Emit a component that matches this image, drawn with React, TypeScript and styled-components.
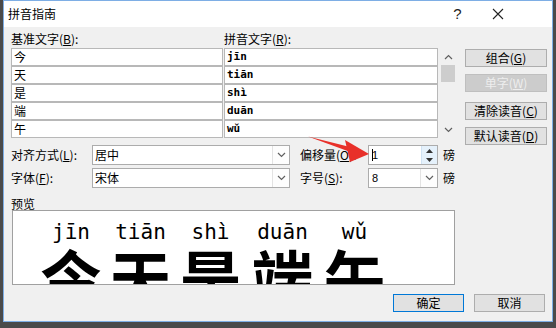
import React from "react";
import styled, { createGlobalStyle } from "styled-components";

const Global = createGlobalStyle`
  html, body { margin: 0; padding: 0; }
  body {
    background: #4a4a4a;
    width: 556px;
    height: 328px;
    overflow: hidden;
    font-family: "Noto Sans CJK SC", "Noto Sans", sans-serif;
    font-size: 12px;
    color: #000;
  }
`;

const Window = styled.div`
  position: relative;
  box-sizing: border-box;
  margin-left: 3px;
  width: 550px;
  height: 322px;
  border: 1px solid #7eaee5;
  background: #f0f0f0;
  display: flex;
  flex-direction: column;
`;

const TitleBar = styled.div`
  height: 26px;
  background: #ffffff;
  display: flex;
  align-items: center;
  padding-left: 4px;
  font-size: 12px;
  line-height: 26px;
`;

const TitleText = styled.div`
  flex: 1;
`;

const TitleBtn = styled.div<{ $w: number }>`
  width: ${(p) => p.$w}px;
  height: 26px;
  display: flex;
  align-items: center;
  justify-content: center;
  font-family: "Liberation Sans", sans-serif;
  font-size: 15px;
  color: #222;
`;

const Body = styled.div`
  flex: 1;
  display: flex;
  flex-direction: column;
  padding: 4px 5px 0 7px;
`;

const TopSection = styled.div`
  display: flex;
  gap: 9px;
`;

const ListBlock = styled.div`
  width: 445px;
  display: flex;
  flex-direction: column;
`;

const LabelRow = styled.div`
  height: 17px;
  display: grid;
  grid-template-columns: 213px 1fr;
  line-height: 15px;
`;

const Label = styled.span`
  white-space: nowrap;
  line-height: inherit;
`;

const Key = styled.span`
  text-decoration: underline;
  text-underline-offset: 1px;
`;

const ListRow = styled.div`
  display: flex;
  gap: 2px;
`;

const Table = styled.div`
  display: grid;
  grid-template-columns: 212px 214px;
  grid-auto-rows: 18px;
  column-gap: 1px;
`;

const Cell = styled.div<{ $mono?: boolean }>`
  box-sizing: border-box;
  border: 1px solid #b8b8b8;
  background: #fff;
  padding-left: 2px;
  display: flex;
  align-items: center;
  font-family: ${(p) =>
    p.$mono
      ? '"DejaVu Sans Mono", monospace'
      : '"Noto Sans CJK SC", sans-serif'};
  font-size: ${(p) => (p.$mono ? "11px" : "12px")};
  font-weight: ${(p) => (p.$mono ? 600 : 400)};
  line-height: 16px;
`;

const ScrollBar = styled.div`
  width: 16px;
  height: 90px;
  display: flex;
  flex-direction: column;
  align-items: center;
`;

const ScrollArrow = styled.div`
  height: 17px;
  width: 16px;
  display: flex;
  align-items: center;
  justify-content: center;
`;

const ScrollTrack = styled.div`
  flex: 1;
  width: 16px;
`;

const Thumb = styled.div`
  width: 14px;
  margin: 0 auto;
  height: 17px;
  background: #cdcdcd;
`;

const SideButtons = styled.div`
  width: 82px;
  display: flex;
  flex-direction: column;
  padding-top: 18px;
`;

const Button = styled.div<{ $mt?: number; $disabled?: boolean; $default?: boolean; $w?: number }>`
  box-sizing: border-box;
  width: ${(p) => (p.$w ? `${p.$w}px` : "100%")};
  height: 18px;
  margin-top: ${(p) => p.$mt ?? 0}px;
  border: 1px solid ${(p) => (p.$default ? "#0078d7" : p.$disabled ? "#bfbfbf" : "#adadad")};
  background: ${(p) => (p.$disabled ? "#cccccc" : "#e1e1e1")};
  color: ${(p) => (p.$disabled ? "#eeeeee" : "#000")};
  display: flex;
  align-items: center;
  justify-content: center;
  line-height: 16px;
  white-space: nowrap;
`;

const Options = styled.div`
  margin-top: 0;
  display: grid;
  grid-template-columns: 81px 198px 78px 70px auto;
  grid-auto-rows: 20px;
  row-gap: 3px;
  align-items: center;
`;

const OptLabel = styled.span<{ $pl?: number }>`
  padding-left: ${(p) => p.$pl ?? 0}px;
  white-space: nowrap;
  line-height: 16px;
`;

const Select = styled.div`
  box-sizing: border-box;
  height: 20px;
  border: 1px solid #acacac;
  background: #fff;
  display: flex;
  align-items: stretch;
`;

const SelectValue = styled.div<{ $mono?: boolean }>`
  flex: 1;
  padding-left: ${(p) => (p.$mono ? 3 : 2)}px;
  display: flex;
  align-items: center;
  font-family: ${(p) => (p.$mono ? '"Liberation Sans", sans-serif' : "inherit")};
  font-size: ${(p) => (p.$mono ? "11px" : "12px")};
  line-height: 16px;
`;

const DropBox = styled.div`
  width: 16px;
  border-left: 1px solid #e3e3e3;
  background: #fdfdfd;
  display: flex;
  align-items: center;
  justify-content: center;
`;

const Spin = styled.div`
  width: 15px;
  display: flex;
  flex-direction: column;
  background: #e5f1fb;
  border-left: 1px solid #cfe2f3;
`;

const SpinHalf = styled.div`
  flex: 1;
  display: flex;
  align-items: center;
  justify-content: center;
`;

const Caret = styled.span`
  display: inline-block;
  width: 1px;
  height: 12px;
  background: #000;
  margin-right: -1px;
`;

const Unit = styled.span`
  padding-left: 5px;
  line-height: 16px;
`;

const PreviewLabel = styled.div`
  margin-top: 9px;
  line-height: 13px;
  height: 13px;
`;

const PreviewBox = styled.div`
  box-sizing: border-box;
  margin-left: 1px;
  width: 443px;
  height: 75px;
  border: 1px solid #a0a0a0;
  background: #fff;
  overflow: hidden;
  display: flex;
  padding-left: 23px;
`;

const Ruby = styled.div<{ $w: number }>`
  width: ${(p) => p.$w}px;
  flex: none;
  display: flex;
  flex-direction: column;
  align-items: center;
`;

const RubyPinyin = styled.div`
  font-family: "DejaVu Sans Mono", monospace;
  font-size: 21px;
  line-height: 24px;
  margin-top: 9px;
  white-space: nowrap;
`;

const RubyBase = styled.div`
  font-family: "Noto Sans CJK SC", sans-serif;
  font-weight: 700;
  font-size: 62px;
  line-height: 62px;
  margin-top: 1px;
`;

const Footer = styled.div`
  margin-top: 9px;
  display: flex;
  justify-content: flex-end;
  gap: 10px;
  padding-right: 2px;
`;

const Overlay = styled.svg`
  position: absolute;
  left: 0;
  top: 0;
  pointer-events: none;
`;

const Chevron = ({ up }: { up?: boolean }) => (
  <svg width="9" height="6" viewBox="0 0 9 6">
    <path
      d={up ? "M1 5 L4.5 1.5 L8 5" : "M1 1 L4.5 4.5 L8 1"}
      fill="none"
      stroke="#606060"
      strokeWidth="1.2"
    />
  </svg>
);

const Tri = ({ up }: { up?: boolean }) => (
  <svg width="7" height="4" viewBox="0 0 7 4">
    <path d={up ? "M0 4 L3.5 0 L7 4Z" : "M0 0 L3.5 4 L7 0Z"} fill="#333" />
  </svg>
);

const rows = [
  ["今", "jīn"],
  ["天", "tiān"],
  ["是", "shì"],
  ["端", "duān"],
  ["午", "wǔ"],
];

const ruby = [
  { b: "今", p: "jīn", w: 70 },
  { b: "天", p: "tiān", w: 69 },
  { b: "是", p: "shì", w: 71 },
  { b: "端", p: "duān", w: 73 },
  { b: "午", p: "wǔ", w: 71 },
];

export default function App() {
  return (
    <>
      <Global />
      <Window>
        <TitleBar>
          <TitleText>拼音指南</TitleText>
          <TitleBtn $w={41}>?</TitleBtn>
          <TitleBtn $w={40}>
            <svg width="12" height="12" viewBox="0 0 12 12">
              <path d="M1 1 L11 11 M11 1 L1 11" stroke="#222" strokeWidth="1.1" />
            </svg>
          </TitleBtn>
          <TitleBtn $w={34} />
        </TitleBar>
        <Body>
          <TopSection>
            <ListBlock>
              <LabelRow>
                <Label>
                  基准文字(<Key>B</Key>):
                </Label>
                <Label>
                  拼音文字(<Key>R</Key>):
                </Label>
              </LabelRow>
              <ListRow>
                <Table>
                  {rows.map(([c, p]) => (
                    <React.Fragment key={c}>
                      <Cell>{c}</Cell>
                      <Cell $mono>{p}</Cell>
                    </React.Fragment>
                  ))}
                </Table>
                <ScrollBar>
                  <ScrollArrow>
                    <Chevron up />
                  </ScrollArrow>
                  <ScrollTrack>
                    <Thumb />
                  </ScrollTrack>
                  <ScrollArrow>
                    <Chevron />
                  </ScrollArrow>
                </ScrollBar>
              </ListRow>
            </ListBlock>
            <SideButtons>
              <Button>
                组合(<Key>G</Key>)
              </Button>
              <Button $mt={7} $disabled>
                单字(<Key>W</Key>)
              </Button>
              <Button $mt={10}>
                清除读音(<Key>C</Key>)
              </Button>
              <Button $mt={7}>
                默认读音(<Key>D</Key>)
              </Button>
            </SideButtons>
          </TopSection>

          <Options>
            <OptLabel>
              对齐方式(<Key>L</Key>):
            </OptLabel>
            <Select>
              <SelectValue>居中</SelectValue>
              <DropBox>
                <Chevron />
              </DropBox>
            </Select>
            <OptLabel $pl={10}>
              偏移量(<Key>O</Key>):
            </OptLabel>
            <Select>
              <SelectValue $mono>
                <Caret />1
              </SelectValue>
              <Spin>
                <SpinHalf>
                  <Tri up />
                </SpinHalf>
                <SpinHalf>
                  <Tri />
                </SpinHalf>
              </Spin>
            </Select>
            <Unit>磅</Unit>

            <OptLabel>
              字体(<Key>F</Key>):
            </OptLabel>
            <Select>
              <SelectValue>宋体</SelectValue>
              <DropBox>
                <Chevron />
              </DropBox>
            </Select>
            <OptLabel $pl={10}>
              字号(<Key>S</Key>):
            </OptLabel>
            <Select>
              <SelectValue $mono>8</SelectValue>
              <DropBox>
                <Chevron />
              </DropBox>
            </Select>
            <Unit>磅</Unit>
          </Options>

          <PreviewLabel>预览</PreviewLabel>
          <PreviewBox>
            {ruby.map((r) => (
              <Ruby key={r.b} $w={r.w}>
                <RubyPinyin>{r.p}</RubyPinyin>
                <RubyBase>{r.b}</RubyBase>
              </Ruby>
            ))}
          </PreviewBox>

          <Footer>
            <Button $w={71} $default>
              确定
            </Button>
            <Button $w={71}>取消</Button>
          </Footer>
        </Body>
        <Overlay width="550" height="322" viewBox="3 0 550 322">
          <path d="M307 135.5 L349 146 L348 150.5 Z" fill="#e8302a" />
          <path d="M344 139 L368 153 L349 161 Z" fill="#e8302a" />
        </Overlay>
      </Window>
    </>
  );
}
